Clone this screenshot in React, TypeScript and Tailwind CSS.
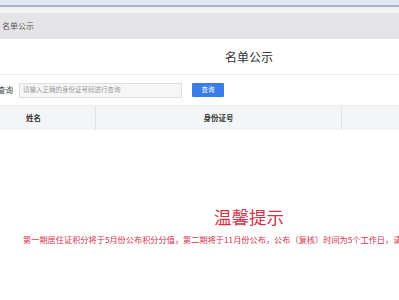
export default function App() {
  return (
    <div className="w-[399px] h-[300px] overflow-hidden bg-white font-['Noto_Sans_CJK_SC',sans-serif]">
      {/* browser chrome / tab strip */}
      <div className="h-[5px] bg-[#dfe9f3]" />
      <div className="h-[2px] bg-[#a8b6c4]" />
      <div className="h-[6px] bg-[#f5f2f4]" />
      <div className="h-[26px] bg-[#e5e5e7] flex items-center pl-[2px] text-[8px] text-[#555]">名单公示</div>

      <div className="-ml-[28px] w-[554px]">
        {/* title */}
        <div className="h-[36px] flex items-center justify-center text-[12px] text-[#333] border-b border-[#ececec]">
          名单公示
        </div>

        {/* search */}
        <div className="h-[30px] flex items-center pl-[26px]">
          <span className="text-[7.5px] text-[#444] w-[21px]">查询</span>
          <div className="w-[163px] h-[15px] bg-[#f6f6f6] border border-[#dedede] flex items-center pl-[3px] text-[6.5px] text-[#9a9a9a]">
            请输入正确的身份证号码进行查询
          </div>
          <button className="ml-[10px] w-[32px] h-[14px] bg-[#3a7de6] rounded-[1px] text-white text-[6.5px] flex items-center justify-center">
            查询
          </button>
        </div>

        {/* table header */}
        <div className="h-[25px] flex bg-[#f4f5f7] border-t border-[#ebebeb] text-[7.5px] font-bold text-[#333]">
          <div className="w-[124px] flex items-center justify-center border-r border-[#e3e3e3]">姓名</div>
          <div className="w-[246px] flex items-center justify-center border-r border-[#e3e3e3]">身份证号</div>
          <div className="flex-1" />
        </div>

        {/* notice */}
        <div className="pt-[77px] flex flex-col items-center">
          <div className="text-[17.5px] leading-[20px] text-[#d23347]">温馨提示</div>
          <div className="mt-[7px] text-[8.2px] leading-[10px] text-[#d8304a] whitespace-nowrap pl-[51px] self-start">
            第一期居住证积分将于5月份公布积分分值，第二期将于11月份公布，公布（复核）时间为5个工作日，请及时查询。
          </div>
        </div>
      </div>
    </div>
  );
}
